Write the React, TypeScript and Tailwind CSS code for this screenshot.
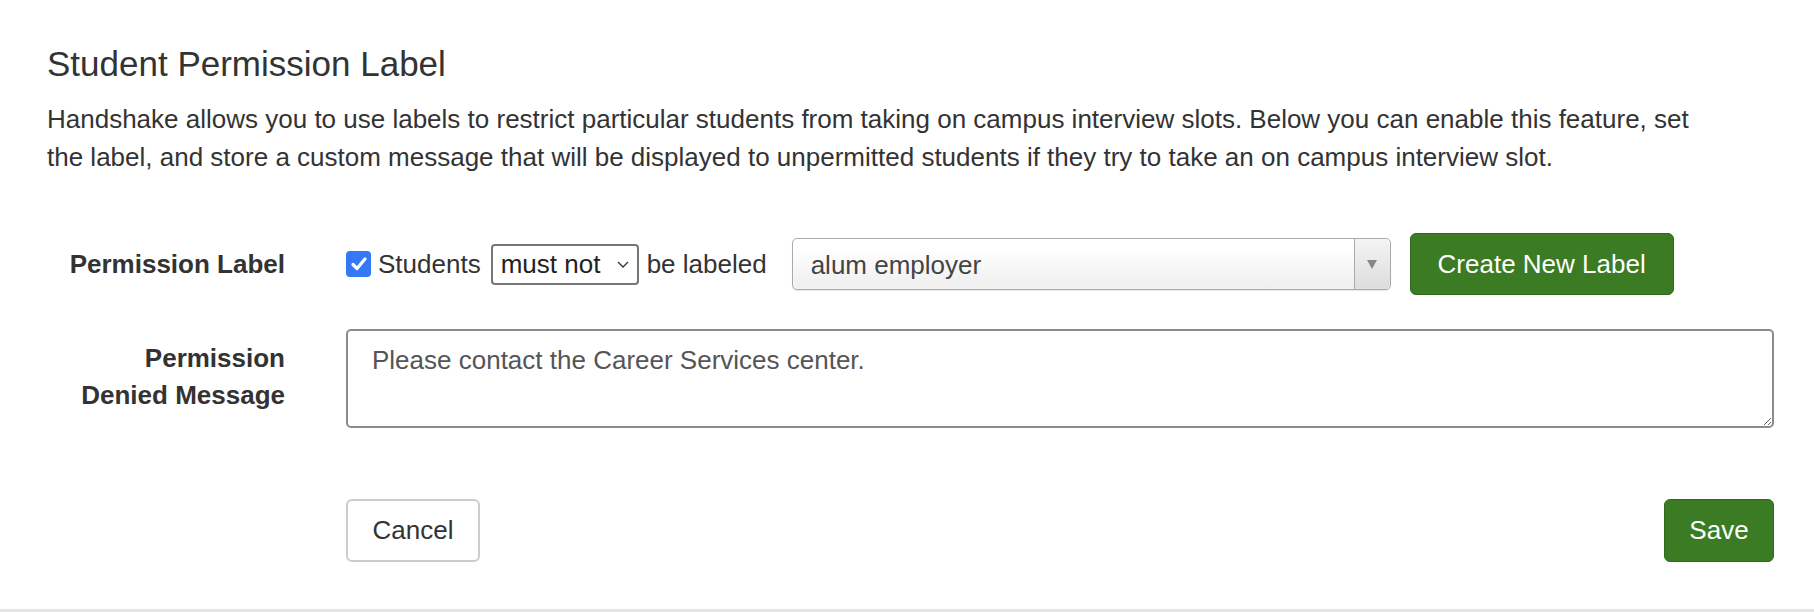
import React from "react";

export default function App() {
  return (
    <div className="w-[1814px] h-[612px] bg-white text-[#333] font-['Liberation_Sans',Arial,sans-serif] flex flex-col">
      <div className="flex-1 pl-[47px] pr-[40px] pt-[43px]">
        <h2 className="text-[35px] leading-[42px] text-[#333] font-normal">Student Permission Label</h2>
        <p className="mt-[15px] text-[26px] leading-[38px] text-[#333] max-w-[1670px]">
          Handshake allows you to use labels to restrict particular students from taking on campus interview slots. Below you can enable this feature, set the label, and store a custom message that will be displayed to unpermitted students if they try to take an on campus interview slot.
        </p>

        <div className="mt-[57px] flex flex-col">
          {/* Row 1 */}
          <div className="flex items-center">
            <div className="w-[299px] pr-[61px] text-right text-[26px] font-bold text-[#333] whitespace-nowrap">Permission Label</div>
            <div className="flex items-center text-[26px]">
              <div className="w-[25px] h-[26px] rounded-[4px] bg-[#3478f6] flex items-center justify-center">
                <svg width="18" height="16" viewBox="0 0 18 16">
                  <path d="M3 8.5 L7 12.5 L15 3" fill="none" stroke="white" strokeWidth="3.2" strokeLinecap="round" strokeLinejoin="round" />
                </svg>
              </div>
              <span className="ml-[7px]">Students</span>
              <div className="ml-[10px] w-[148px] h-[41px] border-2 border-[#767676] rounded-[4px] flex items-center pl-[8px] pr-[7px] justify-between text-[#222]">
                <span>must not</span>
                <svg width="14" height="10" viewBox="0 0 14 10">
                  <path d="M2 3 L7 8 L12 3" fill="none" stroke="#333" strokeWidth="1.3" />
                </svg>
              </div>
              <span className="ml-[8px]">be labeled</span>
              <div className="ml-[25px] w-[599px] h-[52px] border border-[#aaa] rounded-[5px] flex items-stretch bg-gradient-to-b from-white from-[20%] to-[#eee] shadow-[inset_0_0_3px_#fff,0_1px_1px_rgba(0,0,0,0.1)]">
                <div className="flex-1 flex items-center pl-[18px] text-[#444] text-[26px] pt-[2px]">alum employer</div>
                <div className="w-[36px] border-l border-[#aaa] flex items-center justify-center bg-gradient-to-b from-[#f4f4f4] to-[#ddd] rounded-r-[5px]">
                  <svg width="10" height="9" viewBox="0 0 10 9">
                    <path d="M0 0 L10 0 L5 9 Z" fill="#888" />
                  </svg>
                </div>
              </div>
              <button className="ml-[19px] w-[264px] h-[62px] rounded-[6px] bg-[#3b7b23] border border-[#2f6a1a] text-white text-[26px]">
                Create New Label
              </button>
            </div>
          </div>

          {/* Row 2 */}
          <div className="flex mt-[34px]">
            <div className="w-[299px] pr-[61px] pt-[11px] text-right text-[26px] leading-[37px] font-bold text-[#333]">
              Permission
              <br />
              Denied Message
            </div>
            <textarea
              className="w-[1428px] h-[99px] border-2 border-[#8c8c8c] rounded-[5px] px-[24px] py-[14px] text-[26px] leading-[30px] text-[#555] font-['Liberation_Sans',Arial,sans-serif] outline-none"
              defaultValue="Please contact the Career Services center."
            />
          </div>

          {/* Buttons */}
          <div className="flex mt-[71px] pl-[299px] justify-between w-[1727px]">
            <button className="w-[134px] h-[63px] border-2 border-[#ccc] rounded-[6px] bg-white text-[26px] text-[#333]">Cancel</button>
            <button className="w-[110px] h-[63px] rounded-[6px] bg-[#3b7b23] border border-[#2f6a1a] text-white text-[26px]">Save</button>
          </div>
        </div>
      </div>
      <div className="h-[3px] bg-[#e5e5e5]" />
    </div>
  );
}
